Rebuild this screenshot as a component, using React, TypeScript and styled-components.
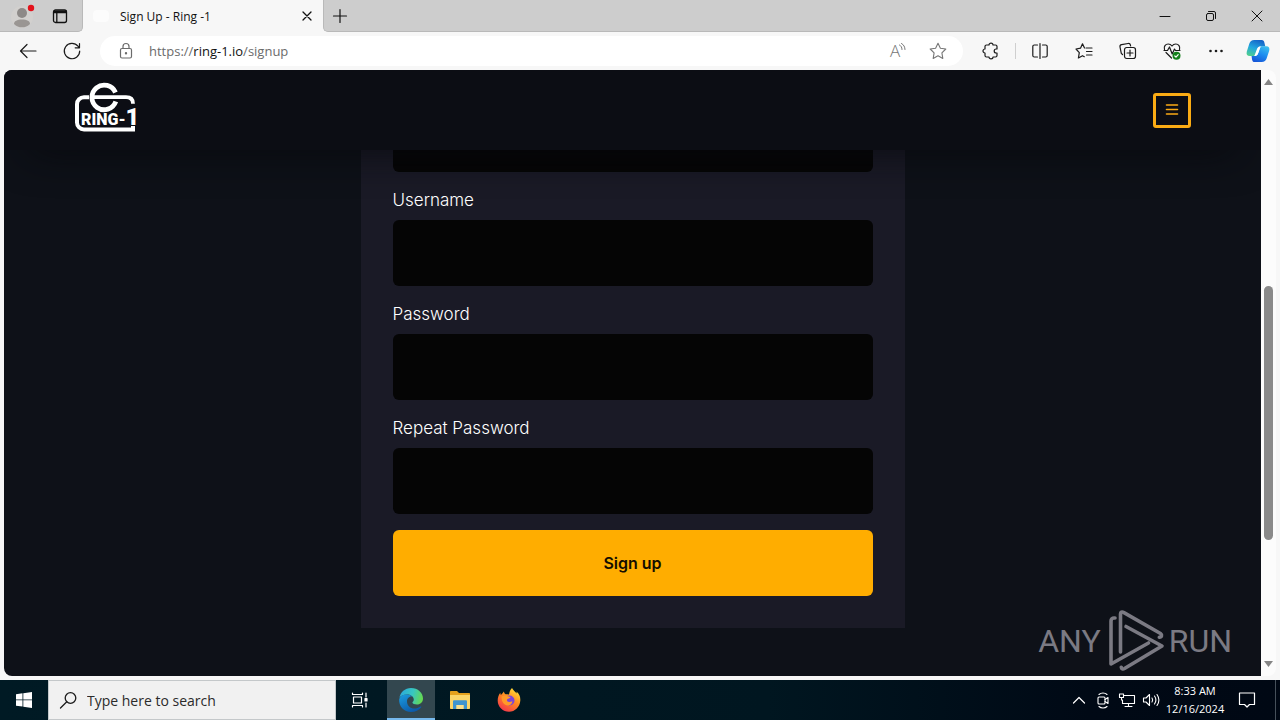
import React from "react";
import styled, { createGlobalStyle } from "styled-components";

const uiFont = `"Open Sans", "Noto Sans", sans-serif`;
const siteFont = `Inter, "Open Sans", sans-serif`;

const GlobalStyle = createGlobalStyle`
  *, *::before, *::after { box-sizing: border-box; }
  body { margin: 0; background: #f7f7f7; font-family: ${uiFont}; }
  button, input { font: inherit; color: inherit; border: 0; padding: 0; margin: 0; }
  button { background: none; }
  svg { display: block; flex: none; overflow: visible; }
`;

/* ---------- layout ---------- */

const Desktop = styled.div`
  display: flex;
  flex-direction: column;
  height: 100vh;
  overflow: hidden;
`;

const TabStrip = styled.div`
  display: flex;
  height: 32px;
  background: #f7f7f7;
  color: #111;
`;

const StripButton = styled.button<{ $width: number }>`
  display: flex;
  align-items: center;
  justify-content: center;
  flex: none;
  width: ${(p) => p.$width}px;
`;

const StripStart = styled.div`
  display: flex;
  padding: 0 3px;
  border-right: 1px solid #b9b9b9;
  border-bottom: 1px solid #b9b9b9;
  border-bottom-right-radius: 5px;
  background: #cdcdcd;
`;

const StripRest = styled.div`
  display: flex;
  flex: 1;
  border-left: 1px solid #b9b9b9;
  border-bottom: 1px solid #b9b9b9;
  border-bottom-left-radius: 5px;
  background: #cdcdcd;
`;

const Tab = styled.div`
  display: flex;
  align-items: center;
  width: 240px;
  height: 32px;
  padding-left: 10px;
  font-size: 12px;
`;

const Favicon = styled.span`
  width: 16px;
  height: 12px;
  margin-right: 11px;
  border-radius: 4px;
  background: #fcfcfc;
`;

const TabTitle = styled.span`
  flex: 1;
  white-space: nowrap;
`;

const WindowControls = styled.div`
  display: flex;
  margin-left: auto;
`;

const Toolbar = styled.div`
  display: flex;
  align-items: center;
  height: 38px;
  padding: 0 2px 0 6px;
  background: #f7f7f7;
  color: #1b1b1b;
`;

const ToolButton = styled.button<{ $width?: number; $muted?: boolean }>`
  display: flex;
  align-items: center;
  justify-content: center;
  flex: none;
  width: ${(p) => p.$width ?? 44}px;
  height: 30px;
  color: ${(p) => (p.$muted ? "#767676" : "inherit")};
`;

const AddressBar = styled.div`
  display: flex;
  align-items: center;
  flex: 1;
  height: 30px;
  margin: 0 6px;
  padding: 0 5px 0 16px;
  border-radius: 15px;
  background: #fff;
`;

const Address = styled.a`
  flex: 1;
  margin-left: 13px;
  font-size: 13px;
  color: #6b6b6b;
  text-decoration: none;

  strong { font-weight: 400; color: #111; }
`;

const ToolDivider = styled.span`
  width: 1px;
  height: 16px;
  margin: 0 2px;
  background: #cfcfcf;
`;

const Viewport = styled.div`
  position: relative;
  display: flex;
  flex: 1;
  min-height: 0;
  margin: 0 4px 4px;
  border-radius: 8px;
  overflow: hidden;
  background: #fcfcfc;
`;

const Page = styled.div`
  display: flex;
  flex-direction: column;
  flex: 1;
  min-width: 0;
  overflow: hidden;
  background: #0e1118;
  font-family: ${siteFont};
`;

const SiteHeader = styled.header`
  position: relative;
  z-index: 1;
  display: flex;
  align-items: center;
  justify-content: space-between;
  flex: none;
  height: 80px;
  padding: 0 70px 0 71px;
  background: #0c0d14;
  box-shadow: 0 24px 40px -24px #07080c;
`;

const LogoLink = styled.a`
  display: block;
  margin-bottom: 6px;
`;

const MenuButton = styled.button`
  display: flex;
  align-items: center;
  justify-content: center;
  width: 38px;
  height: 35px;
  border: 3px solid #fbab14;
  border-radius: 3px;
  color: #fbab14;
`;

const Content = styled.main`
  display: flex;
  flex-direction: column;
  align-items: center;
  justify-content: flex-end;
  flex: 1;
  min-height: 0;
  padding-bottom: 48px;
  overflow: hidden;
`;

const SignUpForm = styled.form`
  display: flex;
  flex-direction: column;
  gap: 16px;
  flex: none;
  width: 100%;
  max-width: 544px;
  padding: 32px;
  background: #1a1a26;
`;

const Field = styled.label`
  display: flex;
  flex-direction: column;
  gap: 8px;
  font-size: 17px;
  font-weight: 300;
  line-height: 24px;
  color: #fff;
`;

const TextInput = styled.input`
  width: 100%;
  height: 66px;
  padding: 0 20px;
  border-radius: 6px;
  outline: 0;
  background: #050505;
`;

const SubmitButton = styled.button`
  height: 66px;
  border-radius: 6px;
  background: #ffad00;
  color: #140d00;
  font-size: 16px;
  font-weight: 600;
`;

const ScrollColumn = styled.div`
  display: flex;
  flex-direction: column;
  align-items: center;
  width: 15px;
  padding: 9px 0;
  color: #858585;
`;

const ScrollTrack = styled.div`
  display: flex;
  flex-direction: column;
  flex: 1;
  width: 9px;
  margin: 11px 0 9px;

  &::before { content: ""; flex: 190; }
  &::after { content: ""; flex: 112; }
`;

const ScrollThumb = styled.div`
  flex: 253;
  border-radius: 5px;
  background: #8a8a8a;
`;

const Watermark = styled.div`
  position: absolute;
  right: 44px;
  bottom: 4px;
  display: flex;
  align-items: center;
  gap: 6px;
  color: #7b7a83;
  font-family: Roboto, "Liberation Sans", sans-serif;
  font-size: 32px;
  font-weight: 400;
  line-height: 62px;
`;

const Taskbar = styled.footer`
  display: flex;
  flex: none;
  height: 40px;
  background: linear-gradient(90deg, #001a24 0%, #001620 60%, #000915 85%, #000814 100%);
  color: #fff;
`;

const TaskButton = styled.button<{ $active?: boolean }>`
  display: flex;
  align-items: center;
  justify-content: center;
  width: 48px;
  margin-right: 1px;
  border-bottom: ${(p) => (p.$active ? "2px solid #76b9ed" : "0")};
  padding-top: ${(p) => (p.$active ? "2px" : "0")};
  background: ${(p) => (p.$active ? "#33474f" : "transparent")};
`;

const StartButton = styled(TaskButton)`
  margin-right: 0;
`;

const TaskSearch = styled.label`
  display: flex;
  align-items: center;
  gap: 10px;
  width: 288px;
  padding: 0 11px;
  border: 1px solid #c4c8ca;
  background: #f1f1f1;
  color: #1c1c1c;

  input {
    flex: 1;
    min-width: 0;
    background: none;
    outline: 0;
    font-size: 14px;
  }
  input::placeholder { color: #2b2b2b; opacity: 1; }
`;

const TaskView = styled(TaskButton)`
  margin-right: 3px;
`;

const Tray = styled.div`
  display: flex;
  margin-left: auto;
`;

const TrayButton = styled.button<{ $width?: number }>`
  display: flex;
  align-items: center;
  justify-content: center;
  width: ${(p) => p.$width ?? 24}px;
`;

const Clock = styled.time`
  width: 64px;
  padding-top: 2px;
  font-size: 11px;
  line-height: 18px;
  text-align: center;
`;

const ShowDesktop = styled.button`
  width: 5px;
  margin-left: 8px;
  border-left: 1px solid #46505a;
`;

/* ---------- icons ---------- */

type IconProps = { size?: number; children: React.ReactNode; stroke?: number };

const Icon = ({ size = 20, stroke = 1, children }: IconProps) => (
  <svg
    width={size}
    height={size}
    viewBox={`0 0 ${size} ${size}`}
    fill="none"
    stroke="currentColor"
    strokeWidth={stroke}
    strokeLinecap="round"
    strokeLinejoin="round"
    aria-hidden="true"
  >
    {children}
  </svg>
);

const ProfileIcon = () => (
  <Icon size={24}>
    <g stroke="none">
      <circle cx="12" cy="13" r="11" fill="#d2d0ce" />
      <circle cx="12" cy="9" r="5" fill="#8d8987" />
      <path d="M4 20c0-3 3-4.500 8-4.500s8 1.500 8 4.500c-2 2.500-5 3.300-8 3.300S6 22.500 4 20z" fill="#9a9693" />
      <circle cx="21" cy="4" r="3.200" fill="#e3121b" />
    </g>
  </Icon>
);

const WorkspaceIcon = () => (
  <Icon size={16} stroke={1.300}>
    <rect x="1.500" y="2" width="13" height="12.500" rx="2" />
    <path d="M2 3.500h12M2 4.300h12" stroke="#111" strokeWidth="2" />
    <path d="M4.800 5v9" />
  </Icon>
);

const StarPath = "M10 2.200l2.400 5 5.400.8-3.900 3.900.9 5.500L10 14.800l-4.800 2.600.9-5.500L2.200 8l5.400-.8z";

const PuzzleIcon = () => (
  <Icon stroke={1.200}>
    <path d="M5.500 4H8a2 1.900 0 0 1 4 0h2.500A1.500 1.500 0 0 1 16 5.500V8h-.8a2 2 0 0 0 0 4h.8v2.500a1.500 1.500 0 0 1-1.500 1.500H12a2 1.900 0 0 1-4 0H5.500A1.500 1.500 0 0 1 4 14.500V12a2 2 0 0 1 0-4V5.500A1.500 1.500 0 0 1 5.500 4z" />
  </Icon>
);

const SplitIcon = () => (
  <Icon stroke={1.200}>
    <path d="M7.500 4H4.300a1.500 1.500 0 0 0-1.500 1.500v9A1.500 1.500 0 0 0 4.300 16h3.200M12.500 4h3.200a1.500 1.500 0 0 1 1.500 1.500v9a1.500 1.500 0 0 1-1.500 1.500h-3.200M10 2.500v15" />
  </Icon>
);

const FavoritesIcon = () => (
  <Icon stroke={1.200}>
    <path d="M12 7h6M12.500 10.500H18M12.500 14H18M10.500 7 8.500 2.800 6.500 7.200 2 8l3.300 3.700-.9 5.300 4.100-2.300 1.800 1" />
  </Icon>
);

const CollectionsIcon = () => (
  <Icon stroke={1.200}>
    <path d="M4.500 13.500 3.300 12.300 2 6a2 2 0 0 1 1.600-2.300l6.500-1.200A2 2 0 0 1 12.400 4l.2 1" />
    <rect x="6.500" y="6.500" width="11" height="11" rx="2.200" />
    <path d="M12 9v6M9 12h6" />
  </Icon>
);

const HealthIcon = () => (
  <Icon stroke={1.200}>
    <path d="M2.500 8.500C1.500 5.500 3.500 3 6.200 3c1.700 0 3 .9 3.800 2 .8-1.100 2.100-2 3.800-2 2.700 0 4.600 2.500 3.700 5.500M4 11.500 9.500 17" />
    <path d="M2 9.500h3.500l2-3.500 2.700 7 2.300-5 1 1.500H18" />
    <circle cx="14.500" cy="14.800" r="4" fill="#13801a" stroke="none" />
    <path d="m12.800 15 1.200 1.100 2.200-2.400" stroke="#fff" />
  </Icon>
);

const CopilotIcon = () => (
  <svg width="24" height="22" viewBox="0 0 26 24" aria-hidden="true">
    <defs>
      <linearGradient id="copilotLeft" x1="0.600" y1="0" x2="0.200" y2="1">
        <stop offset="0" stopColor="#1565c8" />
        <stop offset="0.500" stopColor="#22a6df" />
        <stop offset="1" stopColor="#4fcf8e" />
      </linearGradient>
      <linearGradient id="copilotRight" x1="0.800" y1="0" x2="0.300" y2="1">
        <stop offset="0" stopColor="#3cc0ee" />
        <stop offset="0.500" stopColor="#1d8df0" />
        <stop offset="1" stopColor="#1657d8" />
      </linearGradient>
    </defs>
    <path d="M9 0h8c2 0 2.500 1 3 3l1 4h-4c-3 0-4 1-5 4l-1.500 4.500C9.800 17 9 17.500 7 17.500H4c-3 0-4-2-3.200-5L3.500 4C4.300 1.500 6 0 9 0z" fill="url(#copilotLeft)" />
    <path d="M17 24H9.500c-2 0-2.600-1-3-2.800L6 17.500h2.500c3 0 4-1 5-4L15 9c.7-1.800 1.500-2.300 3.500-2.300H22c3 0 4 2 3.200 5L22.500 20C21.700 22.500 20 24 17 24z" fill="url(#copilotRight)" />
    <path d="M12 9.500c.8-2 1.800-2.700 4-2.800L13.300 14c-.8 2.400-1.700 3.400-4.300 3.500z" fill="#fff" />
  </svg>
);

const RingLogo = () => (
  <svg width="60" height="49" viewBox="0 0 60 49" role="img" aria-label="Ring-1">
    <g fill="none" stroke="#fff">
      <path d="M14 14.200H9a7 7 0 0 0-7 7v18.300a7 7 0 0 0 7 7h51" strokeWidth="4" />
      <path d="M40.500 9.500A12.300 12.300 0 1 0 40.800 18.500" strokeWidth="4.800" />
      <path d="M19 14.200h32c4.500 0 7 2.300 7 6.500" strokeWidth="3.800" />
      <path d="M58 43v4" strokeWidth="4" />
    </g>
    <text x="6" y="42" fill="#fff" fontFamily="Roboto, Liberation Sans, sans-serif" fontWeight="900" fontSize="16">
      RING-<tspan fontSize="24">1</tspan>
    </text>
  </svg>
);

const PlayMark = () => (
  <svg
    width="56"
    height="62"
    viewBox="0 0 56 62"
    fill="none"
    stroke="currentColor"
    strokeWidth="3.600"
    strokeLinecap="round"
    strokeLinejoin="round"
    aria-hidden="true"
  >
    <path d="M8 8H7a3 3 0 0 0-3 3v43l37.500-21" />
    <path d="M13.500 42V4c0-1.800 1.500-2.500 3-1.600L53.500 23.500c1.800 1.200 1.300 3.800-1.200 3.700" />
    <path d="M19 16.500 55 36 17.500 58.500c-1.600.9-3 .3-3.200-1.300" />
  </svg>
);

const EdgeIcon = () => (
  <svg width="24" height="24" viewBox="0 0 24 24" aria-hidden="true">
    <defs>
      <linearGradient id="edgeTop" x1="0" y1="0.300" x2="1" y2="0.500">
        <stop offset="0" stopColor="#2aa9dd" />
        <stop offset="0.550" stopColor="#38c7c0" />
        <stop offset="1" stopColor="#66d94f" />
      </linearGradient>
      <linearGradient id="edgeBody" x1="0" y1="0" x2="0.600" y2="1">
        <stop offset="0" stopColor="#1b9de0" />
        <stop offset="1" stopColor="#0c59a8" />
      </linearGradient>
    </defs>
    <path d="M.4 10C1.300 4.200 6 0 12 0c7 0 12 5 12 10.500 0 3.600-2.500 6-6 6-2.500 0-4.600-.9-4.600-2 0-.7 1.400-1.200 1.400-3C14.800 8.500 11.500 6.500 8 6.500c-3.500 0-6.500 1.300-7.600 3.500z" fill="url(#edgeTop)" />
    <path d="M.2 11C1.500 7.500 4.500 6.300 8 6.500c2 .1 4 .9 5.200 2C10 8 8 10.500 8 13.500c0 5 5 8.500 10.500 6.500 1.200-.4 2.300-1 3-1.500.6-.3 1 .2.700.7C20 22.200 16.300 24 12 24 5 24-.6 18 .2 11z" fill="url(#edgeBody)" />
  </svg>
);

const ExplorerIcon = () => (
  <svg width="22" height="20" viewBox="0 0 22 20" aria-hidden="true">
    <path d="M1 2c0-.6.400-1 1-1h6l2 2h10c.6 0 1 .4 1 1v4H1z" fill="#e5a11c" />
    <path d="M1 5h20v13c0 .6-.4 1-1 1H2c-.6 0-1-.4-1-1z" fill="#fbd568" />
    <path d="M4 11.500c0-.8.500-1.300 1.300-1.300h11.400c.8 0 1.300.5 1.300 1.300V19h-3.500v-4h-7v4H4z" fill="#3f95cf" />
    <path d="M7.500 15h7v4h-7z" fill="#fbe08c" />
  </svg>
);

const FirefoxIcon = () => (
  <svg width="24" height="24" viewBox="0 0 24 24" aria-hidden="true">
    <defs>
      <linearGradient id="foxFlame" x1="0.800" y1="0" x2="0.200" y2="1">
        <stop offset="0" stopColor="#ffe43a" />
        <stop offset="0.450" stopColor="#ff8a20" />
        <stop offset="1" stopColor="#f2304f" />
      </linearGradient>
    </defs>
    <path d="M15 0c1 2.200 3.500 3.700 4.600 5.600.2-.6 0-1.300-.2-2C22.500 6 23.500 9 23.300 12.500 23 18.700 18 23.800 12 23.800S.7 19 .7 12.800c0-3 .8-5.600 2.600-8 .1 1 .2 1.600.6 2.200.9-1.200 2-2 3-3.600.3 1.300.7 2.200 1.700 2.800 1 0 2.300 0 3.400.4C12.500 4 13 1.700 15 0z" fill="url(#foxFlame)" />
    <circle cx="12.500" cy="12.500" r="5" fill="#7b45d8" />
    <path d="M4.500 8.500C6.500 7 9 7.200 11 8.200c1 .4 2 .6 2.500.7-.4 1.300-2 1.600-3 2.100-.8.500-.7 1.700-.2 2.300 1.200 1.300 3.500.5 5-.1.200 2-1.300 4-4 4.300-4 .3-6.800-3.500-6.800-9z" fill="#ff9a28" />
  </svg>
);

const fields = [
  { name: "username", label: "Username", type: "text" },
  { name: "password", label: "Password", type: "password" },
  { name: "repeat", label: "Repeat Password", type: "password" },
];

export default function App() {
  return (
    <Desktop>
      <GlobalStyle />
      <TabStrip>
        <StripStart>
          <StripButton $width={38} aria-label="Profile"><ProfileIcon /></StripButton>
          <StripButton $width={38} aria-label="Workspaces"><WorkspaceIcon /></StripButton>
        </StripStart>
        <Tab>
          <Favicon />
          <TabTitle>Sign Up - Ring -1</TabTitle>
          <StripButton $width={32} aria-label="Close tab">
            <Icon size={8} stroke={1.300}><path d="M0 0l8 8M8 0 0 8" /></Icon>
          </StripButton>
        </Tab>
        <StripRest>
          <StripButton $width={32} aria-label="New tab">
            <Icon size={14} stroke={1.200}><path d="M7 .5v13M.5 7h13" /></Icon>
          </StripButton>
          <WindowControls>
            <StripButton $width={46} aria-label="Minimize">
              <Icon size={10}><path d="M0 5.500h10" /></Icon>
            </StripButton>
            <StripButton $width={46} aria-label="Restore">
              <Icon size={10}>
                <rect x="0.500" y="2.500" width="7" height="7" rx="1.500" />
                <path d="M2.500.500H8A1.500 1.500 0 0 1 9.500 2v5.500" />
              </Icon>
            </StripButton>
            <StripButton $width={46} aria-label="Close">
              <Icon size={10}><path d="M0 0l10 10M10 0 0 10" /></Icon>
            </StripButton>
          </WindowControls>
        </StripRest>
      </TabStrip>

      <Toolbar>
        <ToolButton aria-label="Back">
          <Icon stroke={1.200}><path d="M2.500 10H18M9 3.500 2.500 10 9 16.500" /></Icon>
        </ToolButton>
        <ToolButton aria-label="Refresh">
          <Icon stroke={1.200}><path d="M17.700 10A7.700 7.700 0 1 1 16 5.200l1 1.300M17.500 2.500v4.300h-4.300" /></Icon>
        </ToolButton>
        <AddressBar>
          <Icon>
            <g stroke="#6b6b6b" strokeWidth="1.200">
              <rect x="4.500" y="7.500" width="11" height="9.500" rx="1.500" />
              <path d="M7 7.500V5.500a3 3 0 0 1 6 0v2" />
              <circle cx="10" cy="12.300" r="0.600" fill="#6b6b6b" />
            </g>
          </Icon>
          <Address href="#signup">https://<strong>ring-1.io</strong>/signup</Address>
          <ToolButton $width={40} $muted aria-label="Read aloud">
            <Icon>
              <text x="2" y="16" fontSize="17" fontWeight="300" fontFamily="Open Sans, sans-serif" fill="currentColor" stroke="none">A</text>
              <path d="M11.500 4c1.500.8 2.500 2.200 2.500 4.500M13.500 2.500c2.200 1.200 3.500 3.400 3.500 6" />
            </Icon>
          </ToolButton>
          <ToolButton $width={40} $muted aria-label="Add to favorites">
            <Icon stroke={1.100}><path d={StarPath} /></Icon>
          </ToolButton>
        </AddressBar>
        <ToolButton aria-label="Extensions"><PuzzleIcon /></ToolButton>
        <ToolDivider />
        <ToolButton aria-label="Split screen"><SplitIcon /></ToolButton>
        <ToolButton aria-label="Favorites"><FavoritesIcon /></ToolButton>
        <ToolButton aria-label="Collections"><CollectionsIcon /></ToolButton>
        <ToolButton aria-label="Browser essentials"><HealthIcon /></ToolButton>
        <ToolButton aria-label="More">
          <Icon>
            <g fill="currentColor" stroke="none">
              <circle cx="4.500" cy="10" r="1.300" />
              <circle cx="10" cy="10" r="1.300" />
              <circle cx="15.500" cy="10" r="1.300" />
            </g>
          </Icon>
        </ToolButton>
        <ToolButton $width={40} aria-label="Copilot"><CopilotIcon /></ToolButton>
      </Toolbar>

      <Viewport>
        <Page>
          <SiteHeader>
            <LogoLink href="#home"><RingLogo /></LogoLink>
            <MenuButton aria-label="Menu">
              <Icon size={12} stroke={1.600}><path d="M.5 1h11M.5 5.500h11M.5 10h11" /></Icon>
            </MenuButton>
          </SiteHeader>
          <Content>
            <SignUpForm onSubmit={(e) => e.preventDefault()}>
              <TextInput type="email" name="email" aria-label="Email" />
              {fields.map((f) => (
                <Field key={f.name}>
                  {f.label}
                  <TextInput type={f.type} name={f.name} />
                </Field>
              ))}
              <SubmitButton type="submit">Sign up</SubmitButton>
            </SignUpForm>
          </Content>
        </Page>
        <ScrollColumn>
          <svg width="9" height="6" viewBox="0 0 9 6" fill="currentColor" aria-hidden="true"><path d="M4.500 0 9 6H0z" /></svg>
          <ScrollTrack><ScrollThumb /></ScrollTrack>
          <svg width="9" height="6" viewBox="0 0 9 6" fill="currentColor" aria-hidden="true"><path d="M0 0h9L4.500 6z" /></svg>
        </ScrollColumn>
        <Watermark>
          <span>ANY</span>
          <PlayMark />
          <span>RUN</span>
        </Watermark>
      </Viewport>

      <Taskbar>
        <StartButton aria-label="Start">
          <svg width="16" height="16" viewBox="0 0 16 16" fill="#fff" aria-hidden="true">
            <path d="M0 2.200 6.500 1.300v6.200H0zM7.300 1.200 16 0v7.500H7.300zM0 8.300h6.500v6.200L0 13.700zM7.300 8.300H16V16l-8.700-1.300z" />
          </svg>
        </StartButton>
        <TaskSearch>
          <Icon size={17} stroke={1.300}><circle cx="10.500" cy="6" r="5.300" /><path d="M6.800 9.800.5 16" /></Icon>
          <input type="search" placeholder="Type here to search" aria-label="Search" />
        </TaskSearch>
        <TaskView aria-label="Task view">
          <Icon size={16} stroke={1.200}>
            <path d="M.5 1v1.500h10V1M.5 15v-1.500h10V15M1.500 5h8v6h-8zM14 1v4M14 11v4" />
            <rect x="13" y="6.500" width="2" height="2.500" fill="currentColor" />
          </Icon>
        </TaskView>
        <TaskButton $active aria-label="Microsoft Edge"><EdgeIcon /></TaskButton>
        <TaskButton aria-label="File Explorer"><ExplorerIcon /></TaskButton>
        <TaskButton aria-label="Firefox"><FirefoxIcon /></TaskButton>
        <Tray>
          <TrayButton aria-label="Show hidden icons">
            <Icon size={12} stroke={1.200}><path d="M.5 9 6 3.500 11.500 9" /></Icon>
          </TrayButton>
          <TrayButton aria-label="Meet now">
            <Icon size={16} stroke={1.100}>
              <rect x="3" y="5" width="7" height="7" rx="1" />
              <path d="m10 7.500 3-2v6l-3-2M4 2.500C6 .5 10 .5 12 2.500M4 14.500c2 2 6 2 8 0" />
            </Icon>
          </TrayButton>
          <TrayButton aria-label="Network">
            <Icon size={16} stroke={1.100}>
              <path d="M5 3.500h10.500v8H3.500V8M9.500 11.500v3M6 14.500h7" />
              <path d="M.5 2h4v3.500h-4zM2.500 5.500V8" />
            </Icon>
          </TrayButton>
          <TrayButton aria-label="Volume">
            <Icon size={16} stroke={1.100}>
              <path d="M.5 6h2.500L6.500 2.500v11L3 10H.5zM9 6c.8 1.200.8 2.800 0 4M11.500 4c1.700 2.400 1.700 5.600 0 8M14 2.500c2.300 3.300 2.300 7.700 0 11" />
            </Icon>
          </TrayButton>
          <Clock>
            8:33 AM
            <br />
            12/16/2024
          </Clock>
          <TrayButton $width={40} aria-label="Notifications">
            <Icon size={16} stroke={1.200}><path d="M.5 1h15v11.500h-5L8 15l-2.500-2.500h-5z" /></Icon>
          </TrayButton>
          <ShowDesktop aria-label="Show desktop" />
        </Tray>
      </Taskbar>
    </Desktop>
  );
}
